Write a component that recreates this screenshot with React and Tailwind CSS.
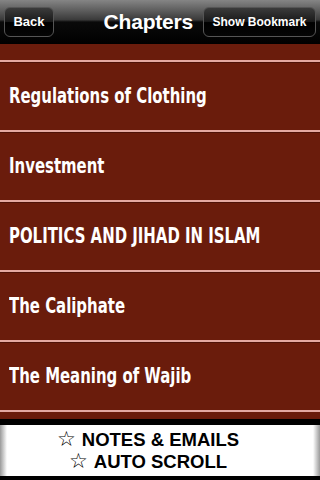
export default function App() {
  const rows = [
    "Regulations of Clothing",
    "Investment",
    "POLITICS AND JIHAD IN ISLAM",
    "The Caliphate",
    "The Meaning of Wajib",
  ];
  const rowFont = { fontFamily: '"Liberation Sans Narrow", "DejaVu Sans Condensed", sans-serif' };
  return (
    <div className="w-[320px] h-[480px] overflow-hidden bg-black flex flex-col" style={{ fontFamily: '"Liberation Sans", Arial, sans-serif' }}>
      {/* Nav bar */}
      <div className="relative h-[44px] shrink-0 bg-[linear-gradient(to_bottom,#858585_0%,#3a3a3a_45%,#0a0a0a_50%,#000000_100%)] flex items-center px-[4px]">
        <div className="h-[30px] w-[50px] rounded-[6px] border border-[#555] bg-[linear-gradient(to_bottom,#3b3b3b_0%,#1a1a1a_48%,#000_52%,#050505_100%)] flex items-center justify-center text-white text-[13px] font-bold">
          Back
        </div>
        <div className="flex-1 flex justify-end pr-[10px]">
          <span className="text-white text-[21px] font-bold tracking-[-0.2px]">Chapters</span>
        </div>
        <div className="h-[30px] w-[113px] rounded-[6px] border border-[#555] bg-[linear-gradient(to_bottom,#3b3b3b_0%,#1a1a1a_48%,#000_52%,#050505_100%)] flex items-center justify-center text-white text-[12px] font-bold">
          Show Bookmark
        </div>
      </div>
      {/* List */}
      <div className="bg-[#6a1c0c] flex flex-col">
        <div className="h-[16px]" />
        {rows.map((r) => (
          <div key={r} className="flex flex-col">
            <div className="h-[2px] bg-[#e4a9a2]" />
            <div className="h-[68px] flex items-center pl-[9px] border-t border-[#4e1208]">
              <span className="inline-block whitespace-nowrap origin-left scale-x-[0.79] text-white text-[21px] font-bold" style={rowFont}>{r}</span>
            </div>
          </div>
        ))}
        <div className="h-[2px] bg-[#e4a9a2]" />
        <div className="h-[7px]" />
      </div>
      <div className="h-[6px] bg-black shrink-0" />
      {/* Bottom panel */}
      <div className="h-[51px] shrink-0 pr-[24px] bg-[linear-gradient(to_right,#9a9a9a_0px,#ffffff_7px,#ffffff_313px,#9a9a9a_320px)] flex flex-col items-center justify-center leading-[22px]">
        <div className="text-black text-[18.5px] font-bold flex items-center">
          <span className="text-[21px] font-normal mr-[6px] leading-none" style={{ fontFamily: '"DejaVu Sans", sans-serif' }}>☆</span>
          NOTES &amp; EMAILS
        </div>
        <div className="text-black text-[18.5px] font-bold flex items-center">
          <span className="text-[21px] font-normal mr-[6px] leading-none" style={{ fontFamily: '"DejaVu Sans", sans-serif' }}>☆</span>
          AUTO SCROLL
        </div>
      </div>
      <div className="flex-1 bg-black" />
    </div>
  );
}
